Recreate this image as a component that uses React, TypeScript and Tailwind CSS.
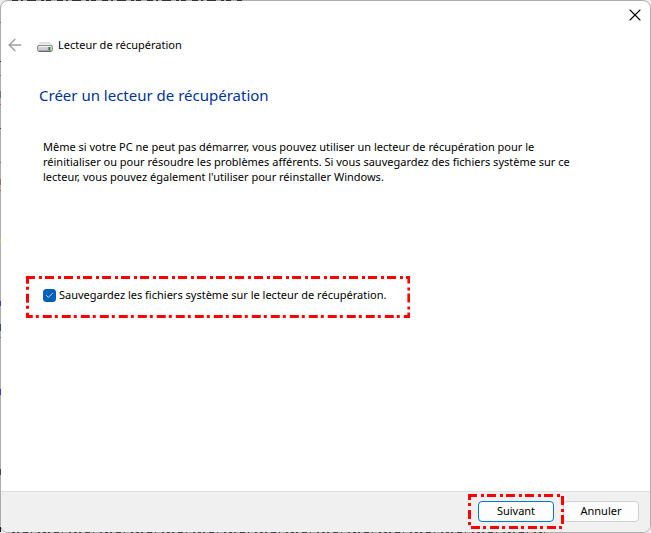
import { ArrowLeft, Check, X } from 'lucide-react'

// Bits of the page behind that show along the window's left edge
const edgeMarks = [
    { y: 22, h: 1, color: '#e04848' },
    { y: 61, h: 1, color: '#303030' },
    { y: 75, h: 1, color: '#e04848' },
    { y: 91, h: 7, color: '#5f7896' },
    { y: 104, h: 1, color: '#e04848' },
    { y: 128, h: 1, color: '#504840' },
    { y: 162, h: 1, color: '#e04848' },
    { y: 179, h: 6, color: '#8c7468' },
    { y: 190, h: 1, color: '#e04848' },
    { y: 239, h: 4, color: '#dcb868' },
    { y: 301, h: 5, color: '#4a30d0' },
    { y: 324, h: 7, color: '#3c4c68' },
    { y: 337, h: 1, color: '#e04848' },
    { y: 389, h: 6, color: '#4a30d0' },
    { y: 469, h: 6, color: '#503c48' },
    { y: 527, h: 5, color: '#181818' },
]

function WindowEdge() {
    return (
        <svg className="absolute inset-0 w-full h-full pointer-events-none" aria-hidden="true">
            <line x1="12" x2="242" y1="0.5" y2="0.5" stroke="#30303a" strokeDasharray="6 3 2 4 9 5 3 2 5 6" />
            <svg y="100%" className="overflow-visible">
                <line x1="12" x2="545" y1="-0.5" y2="-0.5" stroke="#40404a" strokeDasharray="3 2 2 4 5 3 1 6 2 3" />
            </svg>
            {edgeMarks.map(m => (
                <rect key={m.y} x="0" y={m.y} width="1" height={m.h} fill={m.color} />
            ))}
        </svg>
    )
}

function DashFrame({ className }: { className: string }) {
    return (
        <div className={`absolute z-10 pointer-events-none ${className}`}>
            <svg className="block w-full h-full" aria-hidden="true">
                <rect
                    x="1.5"
                    y="1.5"
                    className="w-[calc(100%-3px)] h-[calc(100%-3px)]"
                    fill="none"
                    stroke="#fe0000"
                    strokeWidth="3"
                    strokeDasharray="9 4 3 3"
                    strokeDashoffset="1.5"
                />
            </svg>
        </div>
    )
}

function DriveIcon() {
    return (
        <svg width="16" height="10" viewBox="0 0 16 10" aria-hidden="true">
            <path d="M3.5.8h9L15 4H1z" fill="#f0f0f1" stroke="#bcbcc0" strokeWidth=".7" />
            <rect x=".5" y="3.6" width="15" height="5.6" rx="1.6" fill="#cfcfd8" stroke="#85858a" />
            <path d="M1.8 4.6h12.4" stroke="#f4f4f6" />
            <path d="M1.6 9.3h12.8" stroke="#5a5a5e" />
            <rect x="10.8" y="5" width="3" height="3.2" fill="#8cb88c" />
            <rect x="11.6" y="5" width="1.4" height="3.2" fill="#1f8f24" />
        </svg>
    )
}

export default function App() {
    return (
        <div className="relative min-h-screen flex flex-col bg-[#ededed] font-['Noto_Sans','Open_Sans',sans-serif] text-[11px] text-black">
            <div className="flex-1 flex flex-col rounded-lg overflow-hidden border border-[#adadad] bg-white">
                <header>
                    <div className="flex justify-end pt-1 pr-[5px]">
                        <button type="button" aria-label="Fermer">
                            <X size={20} strokeWidth={1.3} />
                        </button>
                    </div>
                    <div className="flex items-center pl-1 pt-[10px]">
                        <button type="button" aria-label="Précédent" disabled className="text-[#a0a0a0]">
                            <ArrowLeft size={20} strokeWidth={1.6} />
                        </button>
                        <div className="flex items-center gap-[5px] pl-3">
                            <div className="pt-1">
                                <DriveIcon />
                            </div>
                            <span>Lecteur de récupération</span>
                        </div>
                    </div>
                </header>

                <main className="flex-1 px-[25px] pt-7">
                    <h1 className="pl-[13px] text-[15px] leading-6 text-[#003399]">Créer un lecteur de récupération</h1>
                    <p className="mt-8 pl-[17px] leading-[15px] max-w-[556px]">
                        Même si votre PC ne peut pas démarrer, vous pouvez utiliser un lecteur de récupération pour le
                        réinitialiser ou pour résoudre les problèmes afférents. Si vous sauvegardez des fichiers système sur ce
                        lecteur, vous pouvez également l'utiliser pour réinstaller Windows.
                    </p>
                    <div className="relative w-fit mt-[92px] pl-[17px] pr-6 pt-[10px] pb-[14px]">
                        <label className="flex items-center gap-[3px] leading-[18px]">
                            <span className="relative flex items-center justify-center">
                                <input type="checkbox" defaultChecked className="peer appearance-none size-[13px] rounded-[3px] border border-[#005fb8] checked:bg-[#005fb8]" />
                                <Check size={9} className="absolute text-white pointer-events-none invisible peer-checked:visible" />
                            </span>
                            Sauvegardez les fichiers système sur le lecteur de récupération.
                        </label>
                        <DashFrame className="inset-0" />
                    </div>
                </main>

                <footer className="flex justify-end gap-[9px] border-t border-[#dfdfdf] bg-[#f0f0f0] pt-[9px] pb-[10px] pr-[11px]">
                    <div className="relative">
                        <button type="button" className="block h-[21px] w-[76px] rounded border border-[#0078d4] bg-[#fdfdfd]">Suivant</button>
                        <DashFrame className="-inset-x-[10px] -inset-y-[7px]" />
                    </div>
                    <button type="button" className="block h-[21px] w-[76px] rounded border border-[#d0d0d0] bg-[#fdfdfd]">Annuler</button>
                </footer>
            </div>
            <WindowEdge />
        </div>
    )
}
